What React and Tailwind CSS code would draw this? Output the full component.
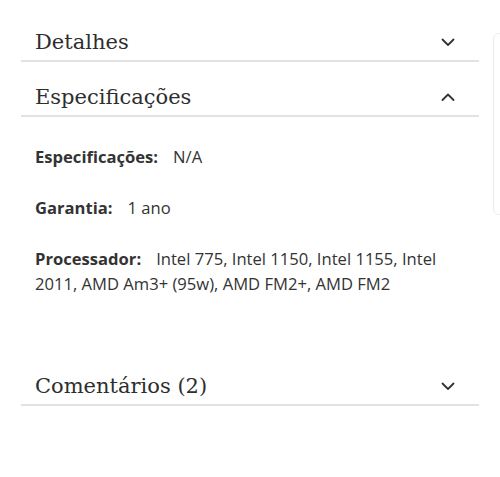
import React from "react";

const Chevron = ({ up }) => (
  <svg width="18" height="18" viewBox="0 0 18 18" fill="none" stroke="#333" strokeWidth="1.8" strokeLinecap="round" strokeLinejoin="round">
    {up ? <path d="M3.5 12 L9 6.5 L14.5 12" /> : <path d="M3.5 6.5 L9 12 L14.5 6.5" />}
  </svg>
);

const Header = ({ title, up }) => (
  <div className="flex items-center justify-between h-[55px] pt-[16px] pl-[14px] pr-[22px] border-b-2 border-[#e2e2e2]">
    <span className="text-[21px] leading-[28px] text-[#2e2e2e]" style={{ fontFamily: '"DejaVu Serif", serif' }}>{title}</span>
    <Chevron up={up} />
  </div>
);

const Row = ({ label, value }) => (
  <div className="text-[16.6px] leading-[25px] text-[#333]">
    <span className="font-bold">{label}</span>
    <span className="ml-[15px]">{value}</span>
  </div>
);

export default function App() {
  return (
    <div className="relative w-[500px] h-[477px] bg-white overflow-hidden" style={{ fontFamily: '"Open Sans", sans-serif' }}>
      <div className="pt-[7px] pl-[21px] pr-[21px]">
        <Header title="Detalhes" />
        <Header title="Especificações" up />
        <div className="pl-[14px] pr-[20px] pt-[27px] pb-[55px] flex flex-col gap-[26px]">
          <Row label="Especificações:" value="N/A" />
          <Row label="Garantia:" value="1 ano" />
          <Row label="Processador:" value="Intel 775, Intel 1150, Intel 1155, Intel 2011, AMD Am3+ (95w), AMD FM2+, AMD FM2" />
        </div>
        <Header title="Comentários (2)" />
      </div>
      <div className="absolute left-[493px] top-[33px] w-[12px] h-[182px] rounded-[6px] border border-[#ececec]"></div>
    </div>
  );
}
